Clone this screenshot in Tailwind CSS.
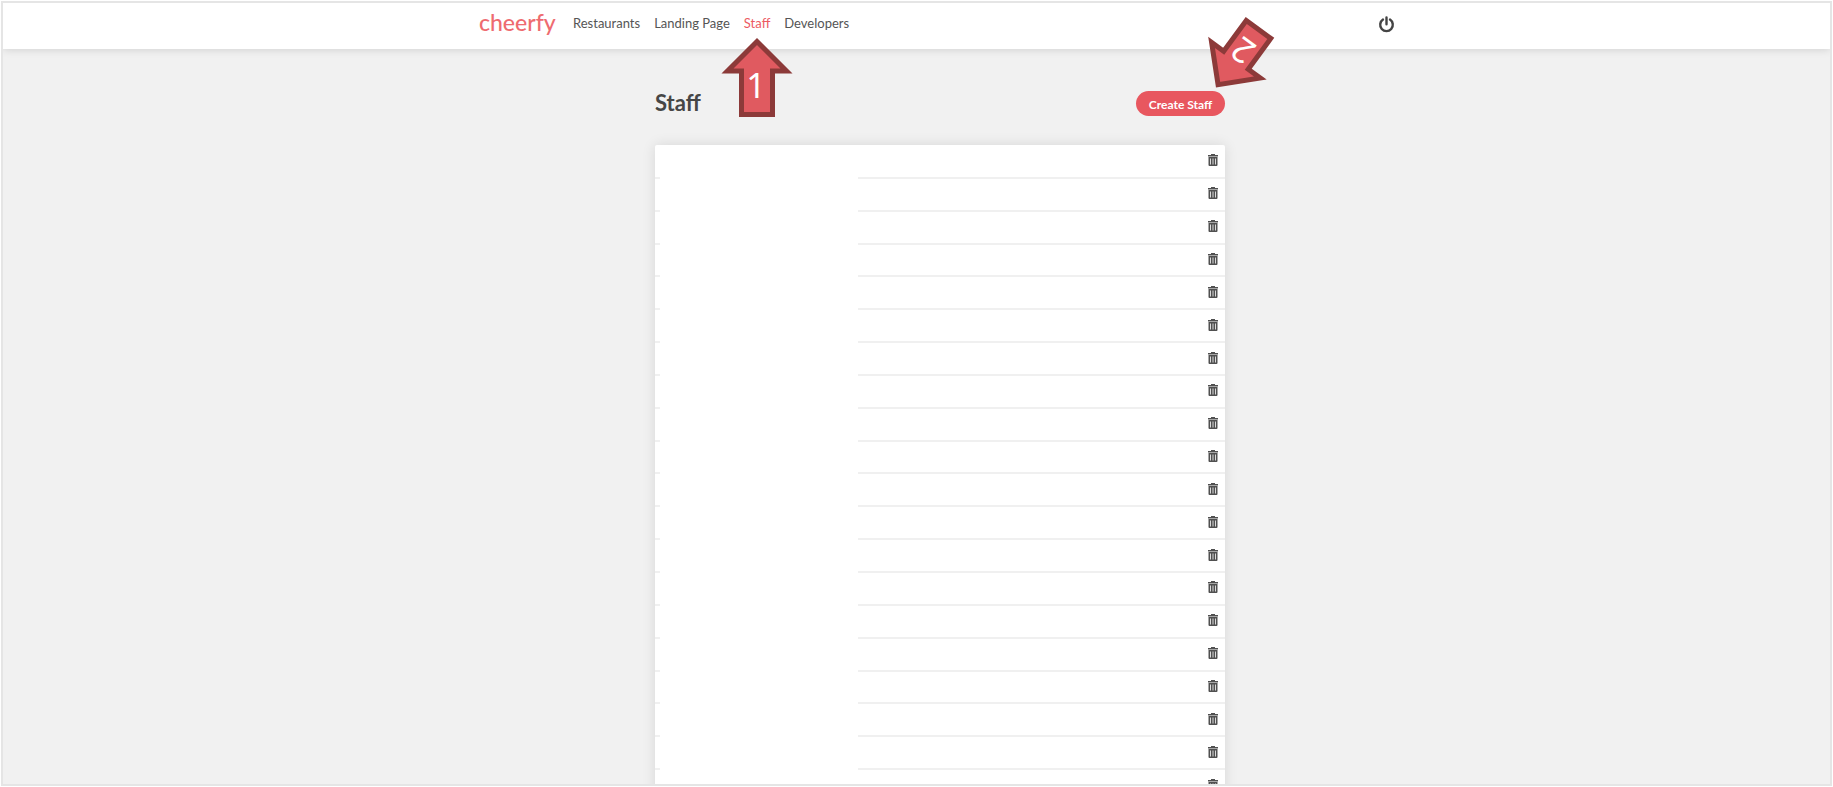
<!DOCTYPE html>
<html lang="en">
<head>
<meta charset="utf-8">
<title>Cheerfy - Staff</title>
<script src="https://cdn.jsdelivr.net/npm/@tailwindcss/browser@4"></script>
</head>
<body class="h-screen overflow-hidden bg-white p-px font-['Lato',sans-serif] text-[#464646]">
<div class="relative h-full overflow-hidden border-2 border-[#e5e5e5] bg-[#f1f1f1]">
  <header class="relative flex h-[46px] justify-center bg-white pl-[41px] shadow-[0_1px_8px_rgba(0,0,0,0.13)]">
    <div class="flex w-[916px] items-center pb-1">
      <a href="#" class="mr-[18px] w-[76px] pb-1 text-[23px] font-medium leading-7 text-[#ee6b70]">cheerfy</a>
      <nav class="flex flex-1 gap-[14px] text-[13px] text-[#555]">
        <a href="#">Restaurants</a>
        <a href="#">Landing Page</a>
        <a href="#" class="text-[#ec5a62]">Staff</a>
        <a href="#">Developers</a>
      </nav>
      <button type="button" aria-label="Log out" class="text-[#444]">
        <svg class="size-[17px]" viewBox="0 0 17 17" fill="none" stroke="currentColor" stroke-width="2.4" stroke-linecap="round"><path d="M8.500 1.500v6.800M5 3.600a6.300 6.300 0 1 0 7 0"/></svg>
      </button>
    </div>
  </header>
  <main class="flex justify-center pl-[47px]">
    <div class="w-[570px]">
      <div class="flex h-[96px] items-center justify-between pt-3">
        <h1 class="pb-[2px] text-[22px] font-bold">Staff</h1>
        <button type="button" class="h-[25px] w-[89px] rounded-full bg-[#e8575f] pt-[3px] text-xs font-bold text-white">Create Staff</button>
      </div>
      <ul id="staff" class="grid h-[658px] auto-rows-fr rounded-t-xs bg-white pt-px shadow-[0_0_14px_rgba(0,0,0,0.11)]"></ul>
    </div>
  </main>
  <svg class="absolute left-[717px] top-[33px] h-[84px] w-[76px]" viewBox="0 0 76 84" role="img" aria-label="Step 1">
    <path d="M37 5.500 66.500 35H52.500V78.500H21.500V35H7.500Z" fill="#e05a60" stroke="#8c3a39" stroke-width="5" stroke-miterlimit="8"/>
    <text x="36" y="62" text-anchor="middle" font-family="Noto Sans, sans-serif" font-size="34" fill="#fff">1</text>
  </svg>
  <svg class="absolute left-[1201px] top-[9px] h-[80px] w-[76px]" viewBox="0 0 76 80" role="img" aria-label="Step 2">
    <g transform="translate(12 75.500) rotate(216.200)">
      <path d="M0 3.500 30.200 33.800H15.200V72H-15.200V33.800H-30.200Z" fill="#e05a60" stroke="#8c3a39" stroke-width="5" stroke-miterlimit="8"/>
      <text x="0" y="58" text-anchor="middle" font-family="Noto Sans, sans-serif" font-size="34" fill="#fff">2</text>
    </g>
  </svg>
</div>
<template id="row">
  <li class="flex">
    <span class="w-[5px] border-b-2 border-[#f0f0f0]"></span>
    <span class="w-[198px]"></span>
    <span class="flex flex-1 items-center justify-end border-b-2 border-[#f0f0f0] pr-[7px] pb-[2px]">
      <button type="button" aria-label="Delete staff member" class="text-[#505050]">
        <svg class="h-3 w-[10px]" viewBox="0 0 10 12"><path fill="currentColor" fill-rule="evenodd" d="M3 0h4v1h3v1.500H0V1h3ZM.5 3h9v8a1 1 0 0 1-1 1h-7a1 1 0 0 1-1-1ZM2.200 4.500v6h.8v-6ZM4.600 4.500v6h.8v-6ZM7 4.500v6h.8v-6Z"/></svg>
      </button>
    </span>
  </li>
</template>
<script>
const list = document.getElementById('staff');
const row = document.getElementById('row');
for (let i = 0; i < 20; i++) list.append(row.content.cloneNode(true));
</script>
</body>
</html>
